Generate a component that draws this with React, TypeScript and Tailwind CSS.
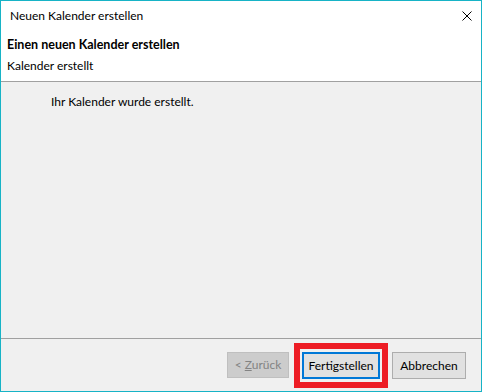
export default function App() {
  const font = { fontFamily: 'Lato, "Noto Sans", "Liberation Sans", sans-serif' };
  return (
    <div
      className="w-[482px] h-[392px] border border-[#17b3c6] bg-[#f0f0f0] flex flex-col text-[12px] text-black"
      style={font}
    >
      {/* title bar */}
      <div className="h-[30px] bg-white flex items-center justify-between pl-[9px] pr-[9px]">
        <span>Neuen Kalender erstellen</span>
        <svg width="10" height="10" viewBox="0 0 10 10">
          <path d="M0.5 0.5 L9.5 9.5 M9.5 0.5 L0.5 9.5" stroke="#000" strokeWidth="1" />
        </svg>
      </div>

      {/* header */}
      <div className="h-[51px] bg-white border-b border-[#a0a0a0] pl-[6px] pt-[6px] flex flex-col gap-[5px]">
        <div className="font-bold text-[12.5px] leading-[16px]">Einen neuen Kalender erstellen</div>
        <div className="leading-[16px]">Kalender erstellt</div>
      </div>

      {/* body */}
      <div className="flex-1 pl-[50px] pt-[12px]">
        <div className="leading-[16px]">Ihr Kalender wurde erstellt.</div>
      </div>

      {/* footer */}
      <div className="h-[53px] border-t border-[#a0a0a0] flex justify-end items-start pt-[13px] pr-[15px]">
        <button className="w-[62px] h-[26px] bg-[#cccccc] border border-[#bfbfbf] text-[#838383]">
          &lt; <span className="underline">Z</span>urück
        </button>
        <div className="relative ml-[13px]">
          <button className="w-[78px] h-[27px] bg-[#e1e1e1] border-2 border-[#0078d7] text-black">
            Fertigstellen
          </button>
          <div className="absolute left-[-8px] top-[-9px] right-[-8px] bottom-[-9px] border-[6px] border-[#ed1c24] pointer-events-none" />
        </div>
        <button className="ml-[12px] w-[74px] h-[27px] bg-[#e1e1e1] border border-[#adadad] text-black">
          Abbrechen
        </button>
      </div>
    </div>
  );
}
